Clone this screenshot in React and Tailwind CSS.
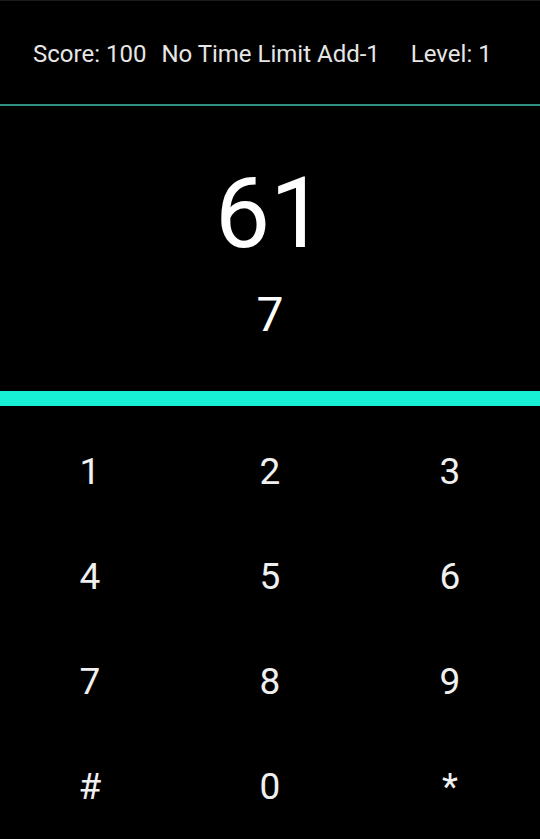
export default function App() {
  const keys = ['1', '2', '3', '4', '5', '6', '7', '8', '9', '#', '0', '*'];

  return (
    <div className="flex h-[839px] w-[540px] flex-col overflow-hidden bg-black text-white [font-family:Roboto,'Noto_Sans',sans-serif]">
      <div className="h-px bg-[#1c1c1c]" />
      <div className="flex h-[103px] items-center pl-[33px] pt-[4px] text-[24px] text-[#e6e6e6]">
        <span>Score: 100</span>
        <span className="ml-[15px]">No Time Limit Add-1</span>
        <span className="ml-[31px]">Level: 1</span>
      </div>
      <div className="h-[2px] bg-[#2f8f80]" />

      <div className="flex h-[286px] flex-col items-center">
        <div className="mt-[48px] text-[98px] leading-[120px]">61</div>
        <div className="mt-[11px] text-[48px] leading-[60px]">7</div>
      </div>
      <div className="h-[15px] bg-[#18f0d6]" />

      <div className="mt-[13px] grid grid-cols-3">
        {keys.map((k) => (
          <button key={k} className="flex h-[105px] items-center justify-center text-[37px] text-[#f0f0f0]">
            {k}
          </button>
        ))}
      </div>
    </div>
  );
}
